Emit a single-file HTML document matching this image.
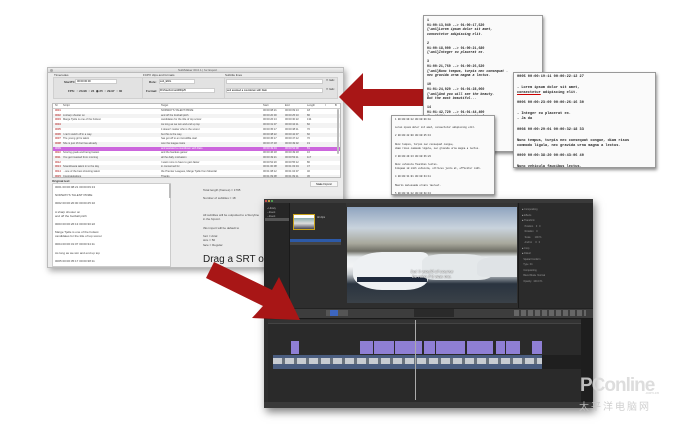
<!DOCTYPE html>
<html><head><meta charset="utf-8"><style>
*{margin:0;padding:0;box-sizing:border-box}
body{width:700px;height:438px;background:#fff;position:relative;overflow:hidden;font-family:"Liberation Sans",sans-serif}
.a{position:absolute}
.t{position:absolute;white-space:nowrap;color:#333}
.doc{position:absolute;background:#fafafa;border:1px solid #999;box-shadow:1px 2px 3px rgba(0,0,0,.45);font-family:"Liberation Mono",monospace;color:#222;overflow:hidden;white-space:pre;padding:2px 3px;font-weight:bold}
.row{position:absolute;left:0;right:0;height:4.7px;font-size:2.6px;line-height:4.7px;color:#444}
.row span{position:absolute}
</style></head><body>

<!-- Subtitle window -->
<div class="a" style="left:47px;top:67px;width:297px;height:201px;background:#ececec;border:1px solid #bbb;box-shadow:2px 3px 6px rgba(0,0,0,.35);z-index:1">
  <div class="a" style="left:0;top:0;width:100%;height:5px;background:linear-gradient(#eee,#d8d8d8);border-bottom:1px solid #bbb"></div>
  <div class="t" style="left:130px;top:0;font-size:3px;color:#555">SubtMaker 00.0.1 | for Export</div>
  <div class="a" style="left:2px;top:1px;width:3px;height:3px;border-radius:50%;background:#aaa"></div>
  <div class="t" style="left:6px;top:5px;font-size:3px">Timecodes</div>
  <div class="a" style="left:5px;top:9px;width:92px;height:22px;background:#e2e2e2;border:1px solid #d0d0d0"></div>
  <div class="t" style="left:16px;top:12px;font-size:3px;font-weight:bold">StartTC:</div>
  <div class="a" style="left:27px;top:11px;width:42px;height:5px;background:#fff;border:1px solid #ccc;font-size:2.6px;line-height:4px;padding-left:1px">00:00:00:00</div>
  <div class="t" style="left:20px;top:21px;font-size:3px;font-weight:bold">FPS:&nbsp; ○ 23.98 &nbsp;○ 24 &nbsp;◉ 25 &nbsp;○ 29.97 &nbsp;○ 30</div>
  <div class="t" style="left:95px;top:5px;font-size:3px">FCPX clips and formats</div>
  <div class="a" style="left:94px;top:9px;width:84px;height:22px;background:#e2e2e2;border:1px solid #d0d0d0"></div>
  <div class="t" style="left:101px;top:12px;font-size:3px;font-weight:bold">Role:</div>
  <div class="a" style="left:111px;top:11px;width:36px;height:5px;background:#fff;border:1px solid #ccc;font-size:2.6px;line-height:4px">sub_ENG</div>
  <div class="t" style="left:98px;top:21px;font-size:3px;font-weight:bold">Format:</div>
  <div class="a" style="left:111px;top:20px;width:56px;height:5px;background:#fff;border:1px solid #ccc;font-size:2.4px;line-height:4px">FFVideoFormat1080p25</div>
  <div class="t" style="left:177px;top:5px;font-size:3px">Subtitle lines</div>
  <div class="a" style="left:176px;top:9px;width:114px;height:22px;background:#e2e2e2;border:1px solid #d0d0d0"></div>
  <div class="a" style="left:178px;top:11px;width:97px;height:5px;background:#fff;border:1px solid #ccc"></div>
  <div class="a" style="left:178px;top:20px;width:97px;height:5px;background:#fff;border:1px solid #ccc;font-size:2.5px;line-height:4px">and assisted a countdown with Dalo</div>
  <div class="t" style="left:278px;top:11px;font-size:2.6px">☐ Italic</div>
  <div class="t" style="left:278px;top:20px;font-size:2.6px">☐ Italic</div>
  <div class="a" style="left:4px;top:35px;width:289px;height:75px;background:#fff;border:1px solid #bbb;overflow:hidden">
    <div class="row" style="top:0;border-bottom:1px solid #ccc"><span style="left:2px">Nr</span><span style="left:10px">Script</span><span style="left:108px">Target</span><span style="left:210px">Start</span><span style="left:232px">End</span><span style="left:254px">Length</span><span style="left:272px">I</span><span style="left:282px">B</span></div>
    <div class="row" style="top:5px"><span style="left:2px;color:#a00">0001</span><span style="left:108px">NORWAY'S TALENT PRIZE</span><span style="left:210px">00:00:08:21</span><span style="left:232px">00:00:09:13</span><span style="left:254px">18</span></div>
    <div class="row" style="top:9.7px;background:#f3f3f3"><span style="left:2px;color:#a00">0002</span><span style="left:10px">A sharp shooter on</span><span style="left:108px">and off the football pitch</span><span style="left:210px">00:00:20:00</span><span style="left:232px">00:00:25:10</span><span style="left:254px">86</span></div>
    <div class="row" style="top:14.4px"><span style="left:2px;color:#a00">0003</span><span style="left:10px">Marge Tjelle is one of the hottest</span><span style="left:108px">candidates for the title of top scorer</span><span style="left:210px">00:00:26:13</span><span style="left:232px">00:00:30:22</span><span style="left:254px">134</span></div>
    <div class="row" style="top:19.1px;background:#f3f3f3"><span style="left:2px;color:#a00">0004</span><span style="left:108px">As long as we win and end up top</span><span style="left:210px">00:00:31:07</span><span style="left:232px">00:00:34:11</span><span style="left:254px">82</span></div>
    <div class="row" style="top:23.8px"><span style="left:2px;color:#a00">0005</span><span style="left:108px">it doesn't matter who is the scorer</span><span style="left:210px">00:00:35:17</span><span style="left:232px">00:00:38:11</span><span style="left:254px">70</span></div>
    <div class="row" style="top:28.5px;background:#f3f3f3"><span style="left:2px;color:#a00">0006</span><span style="left:10px">I can't switch off in a way</span><span style="left:108px">but this is the way</span><span style="left:210px">00:00:38:22</span><span style="left:232px">00:00:42:07</span><span style="left:254px">60</span></div>
    <div class="row" style="top:33.2px"><span style="left:2px;color:#a00">0007</span><span style="left:10px">The young girl is talent</span><span style="left:108px">has got off to an incredible start</span><span style="left:210px">00:00:45:17</span><span style="left:232px">00:00:47:12</span><span style="left:254px">70</span></div>
    <div class="row" style="top:37.9px;background:#f3f3f3"><span style="left:2px;color:#a00">0008</span><span style="left:10px">She is just 16 but has already</span><span style="left:108px">won the league twice</span><span style="left:210px">00:00:47:18</span><span style="left:232px">00:00:49:02</span><span style="left:254px">19</span></div>
    <div class="row" style="top:42.6px;background:#cc66dd;color:#fff"><span style="left:2px">0009</span><span style="left:108px">and assisted a countdown with Dalo</span><span style="left:210px">00:00:49:04</span><span style="left:232px">00:00:52:08</span><span style="left:254px">81</span></div>
    <div class="row" style="top:47.3px"><span style="left:2px;color:#a00">0010</span><span style="left:10px">Scoring goals and being fastest</span><span style="left:108px">and the fearless gamer</span><span style="left:210px">00:00:46:18</span><span style="left:232px">00:00:49:18</span><span style="left:254px">16</span></div>
    <div class="row" style="top:52px;background:#f3f3f3"><span style="left:2px;color:#a00">0011</span><span style="left:10px">You get invested from morning</span><span style="left:108px">all the daily motivation</span><span style="left:210px">00:00:49:21</span><span style="left:232px">00:00:53:11</span><span style="left:254px">117</span></div>
    <div class="row" style="top:56.7px"><span style="left:2px;color:#a00">0012</span><span style="left:108px">I want more to have to gain faster</span><span style="left:210px">00:00:52:20</span><span style="left:232px">00:00:55:12</span><span style="left:254px">80</span></div>
    <div class="row" style="top:61.4px;background:#f3f3f3"><span style="left:2px;color:#a00">0013</span><span style="left:10px">Scandinavia talent in to the day</span><span style="left:108px">in concerned for</span><span style="left:210px">00:01:00:08</span><span style="left:232px">00:01:03:04</span><span style="left:254px">47</span></div>
    <div class="row" style="top:66.1px"><span style="left:2px;color:#a00">0014</span><span style="left:10px">...one of the best shooting talent</span><span style="left:108px">the Premier Leagues, Marge Tjelle from Moerdal</span><span style="left:210px">00:01:08:12</span><span style="left:232px">00:01:04:07</span><span style="left:254px">40</span></div>
    <div class="row" style="top:70.8px;background:#f3f3f3"><span style="left:2px;color:#a00">0015</span><span style="left:10px">Congratulations</span><span style="left:108px">Thanks</span><span style="left:210px">00:01:09:08</span><span style="left:232px">00:01:09:11</span><span style="left:254px">36</span></div>
    <div class="a" style="right:1px;top:5px;width:2px;height:45px;background:#bbb;border-radius:1px"></div>
  </div>
  <div class="t" style="left:4px;top:111px;font-size:3px;font-weight:bold">Original text</div>
  <div class="a" style="left:262px;top:113px;width:28px;height:6px;background:#f8f8f8;border:1px solid #ccc;font-size:2.6px;line-height:5px;text-align:center">Make Fcpxml</div>
  <div class="a" style="left:4px;top:115px;width:119px;height:84px;background:#fff;border:1px solid #ccc;font-size:3px;line-height:4.1px;padding:1px 2px;color:#444;white-space:pre;overflow:hidden">0001 00:00:08:21 00:00:09:13

NORWAY'S TALENT PRIZE

0002 00:00:20:00 00:00:25:10

A sharp shooter on
and off the football pitch

0003 00:00:26:13 00:00:30:22

Marge Tjelle is one of the hottest
candidates for the title of top scorer

0004 00:00:31:07 00:00:34:11

As long as we win and end up top

0005 00:00:35:17 00:00:38:11</div>
  <div class="a" style="left:121px;top:116px;width:1.5px;height:14px;background:#bbb"></div>
  <div class="a" style="left:155px;top:120px;font-size:3px;line-height:4.2px;color:#444;white-space:pre">Total length (frames) = 1795

Number of subtitles = 18



All subtitles will be outputted to a Storyline
in the fcpxml.

this import will be default to

font = Arial
size = 50
face = Regular</div>
  <div class="t" style="left:155px;top:186px;font-size:10px;color:#222">Drag a SRT or TXT file here</div>
</div>

<svg class="a" style="left:0;top:0;z-index:2" width="700" height="438"><polygon points="339,97 363,73 363,89 430,89 430,106 363,106 363,121" fill="#a81616"/></svg>

<div class="doc" style="left:423px;top:15px;width:120px;height:137px;z-index:3;font-size:3.3px;line-height:4.6px">1
01:00:13,040 --> 01:00:17,520
{\an1}<i>Lorem ipsum dolor sit amet,</i>
<i>consectetur adipiscing elit.</i>

2
01:00:18,000 --> 01:00:21,680
{\an1}<i>Integer eu placerat ex.</i>

3
01:00:21,760 --> 01:00:26,520
{\an1}<i>Nunc tempus, turpis nec consequat .</i>
<i>nec gravida urna magna a lectus.</i>

10
01:01:24,020 --> 01:01:28,060
{\an1}<i>And you will see the beauty.</i>
<i>But the most beautiful...</i>

14
01:01:42,720 --> 01:01:44,400
{\an1}<i>Aliquam id tids vehicula,</i>
Nunc et, efficitur nibh.</div>
<div class="doc" style="left:391px;top:115px;width:104px;height:80px;z-index:4;font-size:2.4px;line-height:4.1px;font-weight:normal">1 00:00:09:12 00:00:09:18

Lorem ipsum dolor sit amet, consectetur adipiscing elit.

2 00:00:22:00 00:00:25:13

Nunc tempus, turpis nec consequat congue,
diam risus commodo ligula, nec gravida urna magna a lectus.

3 00:00:29:13 00:00:36:23

Nunc vehicula faucibus lectus.
Aliquam id nibh vehicula, ultrices justo at, efficitur nibh.

4 00:00:31:01 00:00:34:11

Mauris malesuada ornare laoreet.

5 00:00:34:12 00:00:38:13

Nam fringilla, leo eu ultricies blandit, luctus tellus
aliquam sapien, sed senenas ligula massa eu arcu.</div>
<div class="doc" style="left:513px;top:72px;width:143px;height:96px;z-index:5;font-size:3.6px;line-height:5.3px">0005 00:00:19:11 00:00:22:12 27

- Lorem ipsum dolor sit amet,
<u style="text-decoration-color:#c00">consectetur</u> adipiscing elit.

0006 00:00:23:09 00:00:26:16 30

- Integer eu placerat ex.
- Ja da

0008 00:00:29:01 00:00:32:18 33

Nunc tempus, turpis nec consequat congue, diam risus
commodo ligula, nec gravida urna magna a lectus.

0009 00:00:38:20 00:00:43:06 40

Nunc vehicula faucibus lectus.</div>

<div class="a" style="left:264px;top:199px;width:329px;height:209px;background:#2e2e2e;box-shadow:2px 4px 8px rgba(0,0,0,.5);z-index:6;overflow:hidden">
  <div class="a" style="left:0;top:0;width:100%;height:4px;background:#3a3a3a"></div>
  <div class="a" style="left:1px;top:1px;width:2px;height:2px;border-radius:50%;background:#e55"></div>
  <div class="a" style="left:4px;top:1px;width:2px;height:2px;border-radius:50%;background:#eb4"></div>
  <div class="a" style="left:7px;top:1px;width:2px;height:2px;border-radius:50%;background:#5b5"></div>
  <div class="a" style="left:0;top:4px;width:26px;height:105px;background:#262626;border-right:1px solid #1a1a1a"></div>
  <div class="a" style="left:3px;top:8px;font-size:2.4px;line-height:4px;color:#bbb;white-space:pre">▪ Library
 ▪ Event
 ▪ Event
 ▪ Movies</div>
  <div class="a" style="left:1px;top:19px;width:24px;height:3px;background:#555"></div>
  <div class="a" style="left:29px;top:15px;width:22px;height:16px;border:1px solid #c9a21a;background:linear-gradient(#fff 0 20%,#8aa 20%,#ddd 60%,#445)"></div>
  <div class="a" style="left:53px;top:17px;font-size:2.4px;color:#ccc">All clips</div>
  <div class="a" style="left:26px;top:40px;width:51px;height:3px;background:#2d5aa8"></div>
  <div class="a" style="left:26px;top:43px;width:51px;height:3px;background:#444"></div>
  <div class="a" style="left:82px;top:4px;width:171px;height:4px;background:#353535"></div>
  <div class="a" style="left:83px;top:8px;width:170px;height:96px;overflow:hidden;background:linear-gradient(#8fa4bf 0%,#c9d3dd 22%,#a8a89c 38%,#6f6f66 46%,#e8ecee 52%,#f2f4f5 62%,#c3c8cc 70%,#2a3440 80%,#3a4148 100%)">
    <div class="a" style="left:6px;top:45px;width:75px;height:38px;background:#eef1f3;border-radius:40% 10% 30% 40%"></div>
    <div class="a" style="left:10px;top:70px;width:70px;height:5px;background:#1f2a3c"></div>
    <div class="a" style="left:75px;top:47px;width:70px;height:26px;background:#e4e8ea;border-radius:30% 40% 20% 20%"></div>
    <div class="a" style="left:130px;top:50px;width:40px;height:20px;background:#dfe3e6;border-radius:40% 0 0 20%"></div>
    <div class="a" style="left:0;top:62px;width:170px;text-align:center;font-size:4.5px;line-height:5px;color:#fff;font-style:italic;text-shadow:0 0 1px #000">but it would of course<br>be nice if it was me.</div>
  </div>
  <div class="a" style="left:254px;top:4px;width:75px;height:105px;background:#2b2b2b;border-left:1px solid #1a1a1a"></div>
  <div class="a" style="left:258px;top:8px;font-size:2.4px;line-height:5.5px;color:#999;white-space:pre">■ Compositing
■ Effects
■ Transform
    Position    0   0
    Rotation    0
    Scale      100 %
    Anchor     0   0
■ Crop
■ Distort
  Spatial Conform
  Type  Fit
  Compositing
  Blend Mode  Normal
  Opacity   100.0 %</div>
  <div class="a" style="left:0;top:109px;width:100%;height:11px;background:#3d3d3d;border-top:1px solid #222;border-bottom:1px solid #1a1a1a"></div>
  <div class="a" style="left:62px;top:111px;width:22px;height:6px;background:#555"></div>
  <div class="a" style="left:66px;top:111px;width:8px;height:6px;background:#3d66c0"></div>
  <div class="a" style="left:150px;top:110px;width:40px;height:8px;background:#2a2a2a"></div>
  <div class="a" style="left:250px;top:111px;width:72px;height:6px;background:repeating-linear-gradient(90deg,#666 0 5px,#3d3d3d 5px 7px)"></div>
  <div class="a" style="left:4px;top:121px;width:313px;height:86px;background:#2a2a2a"></div>
  <div class="a" style="left:4px;top:121px;width:313px;height:4px;background:#333;border-bottom:1px solid #444"></div>
  <div class="a" style="left:317px;top:120px;width:12px;height:88px;background:#1e1e1e"></div>
  <div class="a" style="left:27px;top:142px;width:8px;height:13px;background:#8f7fd4"></div>
  <div class="a" style="left:96px;top:142px;width:13px;height:13px;background:#8f7fd4"></div>
  <div class="a" style="left:110px;top:142px;width:20px;height:13px;background:#8f7fd4"></div>
  <div class="a" style="left:131px;top:142px;width:27px;height:13px;background:#8f7fd4"></div>
  <div class="a" style="left:160px;top:142px;width:11px;height:13px;background:#8f7fd4"></div>
  <div class="a" style="left:172px;top:142px;width:29px;height:13px;background:#8f7fd4"></div>
  <div class="a" style="left:203px;top:142px;width:26px;height:13px;background:#8f7fd4"></div>
  <div class="a" style="left:232px;top:142px;width:9px;height:13px;background:#8f7fd4"></div>
  <div class="a" style="left:242px;top:142px;width:14px;height:13px;background:#8f7fd4"></div>
  <div class="a" style="left:268px;top:142px;width:10px;height:13px;background:#8f7fd4"></div>
  <div class="a" style="left:9px;top:156px;width:269px;height:14px;background:#4a5d80"></div>
  <div class="a" style="left:9px;top:159px;width:269px;height:6px;background:repeating-linear-gradient(90deg,#c8ccd2 0 9px,#6a737e 9px 12px)"></div>
  <div class="a" style="left:278px;top:156px;width:39px;height:14px;background:#1f1f1f"></div>
  <div class="a" style="left:151px;top:121px;width:1px;height:80px;background:#aaa"></div>
  <div class="a" style="left:0;top:203px;width:100%;height:6px;background:#393939"></div>
</div>

<svg class="a" style="left:0;top:0;z-index:7" width="700" height="438"><polygon points="214,262 272,290 279,277 300,320 252,318 263,306 206,278" fill="#a81616"/></svg>

<div class="t" style="left:580px;top:375px;font-size:19px;color:rgba(215,215,215,.85);letter-spacing:-1px;z-index:8;font-weight:bold">PConline</div>
<div class="t" style="left:645px;top:390px;font-size:4px;color:#ccc;z-index:8">.com.cn</div>
<div class="t" style="left:579px;top:398px;font-size:10px;color:rgba(200,200,200,.85);letter-spacing:2px;z-index:8;font-family:'Liberation Sans','Noto Sans CJK SC',sans-serif">太平洋电脑网</div>
</body></html>
